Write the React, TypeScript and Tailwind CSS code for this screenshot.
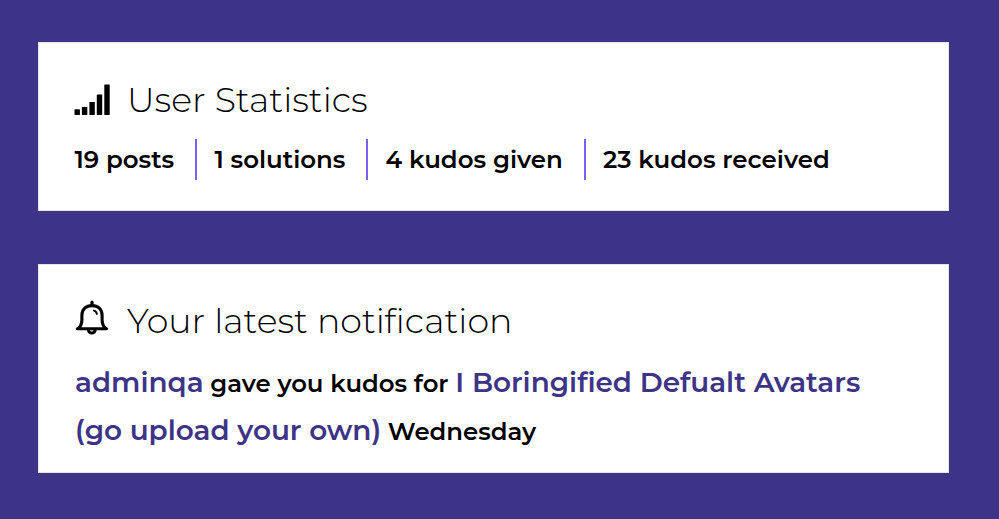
import React from "react";

const stats = [
  { label: "19 posts", width: "w-[122px]" },
  { label: "1 solutions", width: "w-[171px] pl-[18px]" },
  { label: "4 kudos given", width: "w-[218px] pl-[18px]" },
  { label: "23 kudos received", width: "pl-[17.5px]" },
];

function BarsIcon() {
  return (
    <svg className="block h-[31px] w-[36px]" viewBox="0 0 36 31" fill="#000">
      <rect x="0.5" y="25.3" width="5.4" height="5.6" rx="0.4" />
      <rect x="7.9" y="23" width="5.4" height="7.9" rx="0.4" />
      <rect x="15.4" y="18" width="5.4" height="12.9" rx="0.4" />
      <rect x="22.8" y="10.6" width="5.4" height="20.3" rx="0.4" />
      <rect x="30.3" y="0.5" width="5.4" height="30.4" rx="0.4" />
    </svg>
  );
}

function BellIcon() {
  return (
    <svg
      className="block h-[36px] w-[34px]"
      viewBox="0 0 34 36"
      fill="none"
      stroke="#000"
      strokeLinecap="round"
      strokeLinejoin="round"
    >
      <path d="M17 2.2V5" strokeWidth="3.2" />
      <path
        d="M2.4 28.8C5.6 27 6.9 24 6.9 20V15.4C6.9 9.2 11 5.6 17 5.6S27.1 9.2 27.1 15.4V20C27.1 24 28.4 27 31.6 28.8Z"
        strokeWidth="3.1"
      />
      <path d="M13.5 30.4A3.4 3.5 0 0 0 20.1 30.4" strokeWidth="3" />
      <path d="M18.9 10.6C20.6 11 21.5 12.1 21.8 13.8" strokeWidth="2" />
    </svg>
  );
}

export default function App() {
  return (
    <div className="h-[519px] w-[999px] overflow-hidden bg-[#3d3487] pl-[38px] pt-[42px] font-['Montserrat','Inter',sans-serif] text-black">
      {/* User statistics */}
      <section className="h-[169px] w-[911px] border border-[#e9e3e6] bg-white pl-[35px] pt-[34px]">
        <div className="flex h-[48px] items-start gap-[17px]">
          <div className="pt-[7px]">
            <BarsIcon />
          </div>
          <h2 className="whitespace-nowrap text-[34.8px] font-light leading-[46px]">
            User Statistics
          </h2>
        </div>
        <ul className="mt-[14px] flex h-[41px] divide-x-2 divide-[#7b61f0] pl-[0.5px]">
          {stats.map((s) => (
            <li
              key={s.label}
              className={`shrink-0 whitespace-nowrap text-[24.5px] font-semibold leading-[41px] ${s.width}`}
            >
              {s.label}
            </li>
          ))}
        </ul>
      </section>

      {/* Latest notification */}
      <section className="mt-[53px] h-[209px] w-[911px] border border-[#e9e3e6] bg-white pl-[36px] pt-[33px]">
        <div className="flex h-[48px] items-start gap-[18px]">
          <div className="pt-[2px]">
            <BellIcon />
          </div>
          <h2 className="whitespace-nowrap text-[34.8px] font-light leading-[46px]">
            Your latest notification
          </h2>
        </div>
        <p className="mt-[13px] whitespace-nowrap text-[24.4px] font-semibold leading-[47px]">
          <a href="#" className="text-[27.85px] text-[#3d3487]">adminqa</a>{" "}
          <span>gave you kudos for</span>{" "}
          <a href="#" className="text-[27.85px] text-[#3d3487]">
            I Boringified Defualt Avatars
            <br />
            (go upload your own)
          </a>{" "}
          <span>Wednesday</span>
        </p>
      </section>
    </div>
  );
}
